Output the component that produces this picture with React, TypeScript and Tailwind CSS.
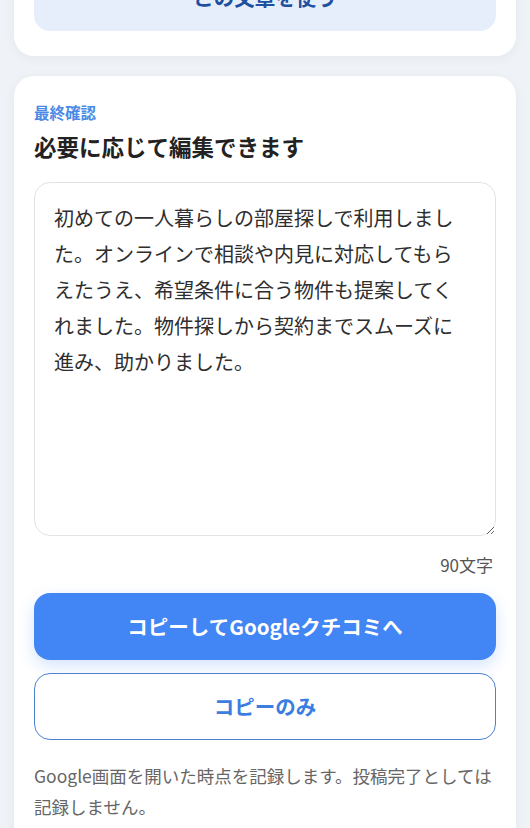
import React from "react";

const font = { fontFamily: '"Noto Sans CJK JP", "Noto Sans", sans-serif' };

export default function App() {
  const text =
    "初めての一人暮らしの部屋探しで利用しました。オンラインで相談や内見に対応してもらえたうえ、希望条件に合う物件も提案してくれました。物件探しから契約までスムーズに進み、助かりました。";
  return (
    <div
      className="flex h-screen flex-col overflow-hidden bg-[#eff2f6] px-[14px] font-['Noto_Sans_CJK_JP',sans-serif]"
      style={font}
    >
      <div className="-mt-[56px] shrink-0 rounded-[20px] bg-white px-5 pb-[25px] pt-5 shadow-[0_2px_12px_rgba(30,40,60,0.05)]">
        <button className="flex h-[67px] w-full items-center justify-center rounded-[16px] bg-[#e6eefb] text-[20.5px] font-bold text-[#1f4f9f]">
          この文章を使う
        </button>
      </div>

      <div className="mt-5 shrink-0 rounded-[20px] bg-white px-5 pb-8 pt-[25px] shadow-[0_2px_12px_rgba(30,40,60,0.05)]">
        <div className="text-[15.5px] font-bold leading-[22px] text-[#4a8ae6]">最終確認</div>
        <h2 className="mt-2 text-[22.5px] font-bold leading-[31px] text-[#222]">
          必要に応じて編集できます
        </h2>
        <textarea
          className="mt-5 block h-[354px] w-full resize-y rounded-[16px] border border-[#e1e3e7] bg-white pb-4 pl-[19px] pr-[30px] pt-[17px] text-[20px] leading-[36px] text-[#2e2e2e] outline-none"
          style={font}
          defaultValue={text}
        />
        <div className="mt-4 pr-[3px] text-right text-[17px] leading-[25px] text-[#555]">90文字</div>
        <button className="mt-[16px] flex h-[67px] w-full items-center justify-center rounded-[16px] bg-[#4285f4] text-[20.5px] font-bold text-white shadow-[0_6px_16px_rgba(66,133,244,0.22)]">
          コピーしてGoogleクチコミへ
        </button>
        <button className="mt-[13px] flex h-[67px] w-full items-center justify-center rounded-[16px] border-[1.5px] border-[#4f80d2] bg-white text-[20.5px] font-bold text-[#3b7de0]">
          コピーのみ
        </button>
        <p className="mt-5 text-[17.5px] leading-[31px] text-[#666]">
          Google画面を開いた時点を記録します。投稿完了としては記録しません。
        </p>
      </div>
    </div>
  );
}
